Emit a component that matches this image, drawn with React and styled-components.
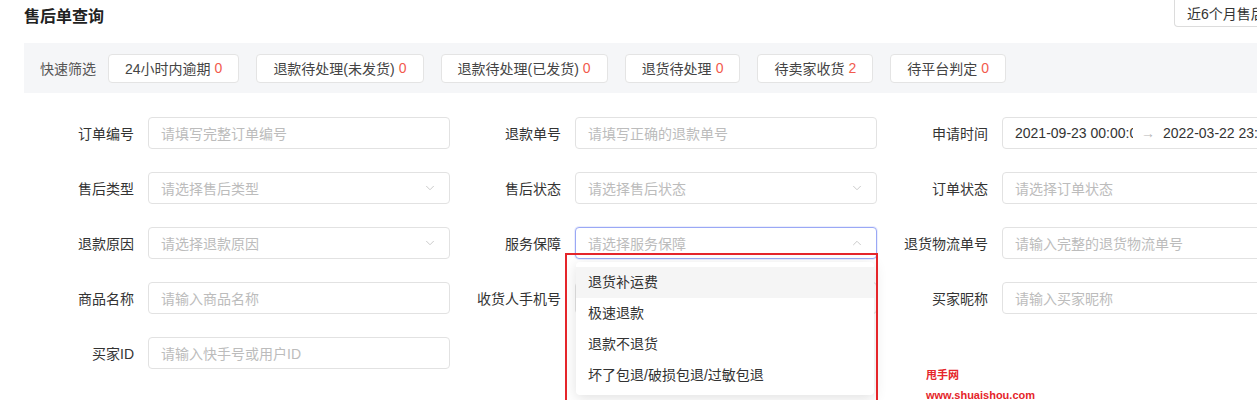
import React from 'react';
import styled, { createGlobalStyle } from 'styled-components';
import { ChevronDown, ChevronUp } from 'lucide-react';

const Global = createGlobalStyle`
  html, body { margin: 0; padding: 0; background: #fff; }
  body {
    font-family: "Liberation Sans", "Noto Sans CJK SC", sans-serif;
    font-size: 14px;
    color: #333;
    overflow: hidden;
  }
`;

const Page = styled.div`
  position: relative;
  width: 1257px;
  height: 400px;
  overflow: hidden;
`;

const Inner = styled.div`
  width: 1360px;
  padding-left: 24px;
`;

const Header = styled.div`
  display: flex;
  justify-content: space-between;
  align-items: flex-start;
  height: 43px;
  width: 1233px;
`;

const Title = styled.h1`
  margin: 6px 0 0;
  font-size: 16px;
  line-height: 22px;
  font-weight: 700;
  color: #222;
`;

const RangeButton = styled.button`
  height: 27px;
  padding: 0 12px;
  width: 110px;
  margin-right: -27px;
  border: 1px solid #dcdcdc;
  border-top: none;
  border-radius: 0 0 0 4px;
  background: #fff;
  font: inherit;
  font-size: 14px;
  color: #333;
  text-align: left;
  white-space: nowrap;
  overflow: hidden;
`;

const QuickBar = styled.div`
  display: flex;
  align-items: center;
  gap: 17px;
  height: 50px;
  padding-left: 16px;
  background: #f5f6f8;
`;

const QuickLabel = styled.span`
  color: #555;
  margin-right: -5px;
`;

const Chip = styled.div`
  height: 29px;
  box-sizing: border-box;
  padding: 0 16px;
  display: flex;
  align-items: center;
  background: #fff;
  border: 1px solid #e4e4e4;
  border-radius: 4px;
  color: #444;
  white-space: nowrap;
`;

const Count = styled.span`
  color: #f25a4d;
  margin-left: 4px;
`;

const Form = styled.div`
  display: grid;
  grid-template-columns: repeat(3, 427px);
  row-gap: 23px;
  margin-top: 24px;
`;

const Field = styled.div`
  position: relative;
  display: flex;
  align-items: center;
  gap: 14px;
`;

const Label = styled.label`
  width: 110px;
  text-align: right;
  color: #333;
  white-space: nowrap;
`;

const Box = styled.div`
  position: relative;
  width: 302px;
  height: 32px;
  box-sizing: border-box;
  padding: 0 12px;
  display: flex;
  align-items: center;
  justify-content: space-between;
  border: 1px solid ${(p) => (p.$focused ? '#9aa8f5' : '#e2e2e2')};
  box-shadow: ${(p) => (p.$focused ? '0 0 0 1px rgba(120,140,240,0.15)' : 'none')};
  border-radius: 4px;
  background: #fff;
`;

const Placeholder = styled.span`
  color: #bcbcbc;
  white-space: nowrap;
`;

const Icon = styled.span`
  display: flex;
  color: #c4c4c4;
`;

const DateText = styled.span`
  display: inline-block;
  width: 118px;
  overflow: hidden;
  white-space: nowrap;
  color: #333;
  font-size: 14px;
`;

const Arrow = styled.span`
  color: #b8b8b8;
  margin: 0 8px 0 8px;
`;

const DateWrap = styled.div`
  display: flex;
  align-items: center;
`;

const Dropdown = styled.div`
  position: absolute;
  left: 0;
  top: 34px;
  width: 298px;
  padding: 5px 0 4px;
  background: #fff;
  border-radius: 4px;
  box-shadow: 0 3px 14px rgba(0, 0, 0, 0.12);
  z-index: 5;
`;

const Option = styled.div`
  height: 31px;
  line-height: 31px;
  padding: 0 12px;
  color: #333;
  background: ${(p) => (p.$active ? '#f5f5f5' : '#fff')};
`;

const Marker = styled.div`
  position: absolute;
  left: -11px;
  top: 25px;
  width: 313px;
  height: 160px;
  box-sizing: border-box;
  border: 2px solid #e5252a;
  z-index: 6;
  pointer-events: none;
`;

const Watermark = styled.div`
  position: absolute;
  left: 926px;
  top: 365px;
  color: #e5252a;
  font-weight: 700;
  font-size: 11px;
  line-height: 20px;
`;

const chips = [
  ['24小时内逾期', 0],
  ['退款待处理(未发货)', 0],
  ['退款待处理(已发货)', 0],
  ['退货待处理', 0],
  ['待卖家收货', 2],
  ['待平台判定', 0],
];

const options = ['退货补运费', '极速退款', '退款不退货', '坏了包退/破损包退/过敏包退'];

function Input({ placeholder, select }) {
  return (
    <Box>
      <Placeholder>{placeholder}</Placeholder>
      {select && (
        <Icon>
          <ChevronDown size={14} strokeWidth={1.5} />
        </Icon>
      )}
    </Box>
  );
}

export default function App() {
  return (
    <Page>
      <Global />
      <Inner>
        <Header>
          <Title>售后单查询</Title>
          <RangeButton>近6个月售后</RangeButton>
        </Header>
        <QuickBar>
          <QuickLabel>快速筛选</QuickLabel>
          {chips.map(([name, n]) => (
            <Chip key={name}>
              {name}
              <Count>{n}</Count>
            </Chip>
          ))}
        </QuickBar>
        <Form>
          <Field>
            <Label>订单编号</Label>
            <Input placeholder="请填写完整订单编号" />
          </Field>
          <Field>
            <Label>退款单号</Label>
            <Input placeholder="请填写正确的退款单号" />
          </Field>
          <Field>
            <Label>申请时间</Label>
            <Box>
              <DateWrap>
                <DateText>2021-09-23 00:00:00</DateText>
                <Arrow>→</Arrow>
                <DateText>2022-03-22 23:59:59</DateText>
              </DateWrap>
            </Box>
          </Field>

          <Field>
            <Label>售后类型</Label>
            <Input placeholder="请选择售后类型" select />
          </Field>
          <Field>
            <Label>售后状态</Label>
            <Input placeholder="请选择售后状态" select />
          </Field>
          <Field>
            <Label>订单状态</Label>
            <Input placeholder="请选择订单状态" select />
          </Field>

          <Field>
            <Label>退款原因</Label>
            <Input placeholder="请选择退款原因" select />
          </Field>
          <Field>
            <Label>服务保障</Label>
            <Box $focused>
              <Placeholder>请选择服务保障</Placeholder>
              <Icon>
                <ChevronUp size={14} strokeWidth={1.5} />
              </Icon>
              <Dropdown>
                {options.map((o, i) => (
                  <Option key={o} $active={i === 0}>
                    {o}
                  </Option>
                ))}
              </Dropdown>
              <Marker />
            </Box>
          </Field>
          <Field>
            <Label>退货物流单号</Label>
            <Input placeholder="请输入完整的退货物流单号" />
          </Field>

          <Field>
            <Label>商品名称</Label>
            <Input placeholder="请输入商品名称" />
          </Field>
          <Field>
            <Label>收货人手机号</Label>
            <Input placeholder="请输入收货人手机号" />
          </Field>
          <Field>
            <Label>买家昵称</Label>
            <Input placeholder="请输入买家昵称" />
          </Field>

          <Field>
            <Label>买家ID</Label>
            <Input placeholder="请输入快手号或用户ID" />
          </Field>
        </Form>
      </Inner>
      <Watermark>
        甩手网
        <br />
        www.shuaishou.com
      </Watermark>
    </Page>
  );
}
